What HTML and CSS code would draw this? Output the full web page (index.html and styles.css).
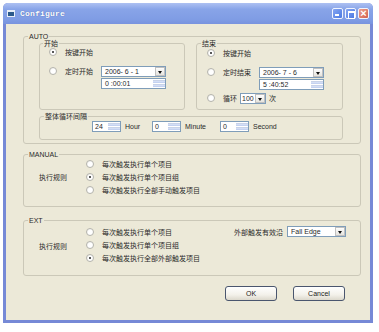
FILE: index.html
```html
<!DOCTYPE html>
<html lang="zh-CN">
<head>
  <meta charset="UTF-8" />
  <title>Configure</title>
  <link rel="stylesheet" href="styles.css">
</head>
<body>
  <div class="window">
    <div class="titlebar">
      <span class="app-icon"></span>
      <span class="title">Configure</span>
      <div class="caption-btns">
        <span class="cbtn min"></span>
        <span class="cbtn max"></span>
        <span class="cbtn close">×</span>
      </div>
    </div>

    <div class="client">
      <!-- AUTO -->
      <div class="group auto">
        <span class="group-title">AUTO</span>
        <div class="auto-top">
          <div class="group start">
            <span class="group-title">开始</span>
            <div class="opt"><span class="radio on"></span><span>按键开始</span></div>
            <div class="opt gap"><span class="radio"></span><span>定时开始</span>
              <div class="combo date"><span class="val">2006- 6 - 1</span><span class="drop"></span></div>
            </div>
            <div class="spin time"><span class="val">0 :00:01</span><span class="arrows"><i></i><i></i></span></div>
          </div>
          <div class="group stop">
            <span class="group-title">结束</span>
            <div class="opt"><span class="radio on"></span><span>按键开始</span></div>
            <div class="opt gap"><span class="radio"></span><span>定时结束</span>
              <div class="combo date"><span class="val">2006- 7 - 6</span><span class="drop"></span></div>
            </div>
            <div class="spin time"><span class="val">5 :40:52</span><span class="arrows"><i></i><i></i></span></div>
            <div class="opt loop"><span class="radio"></span><span>循环</span>
              <div class="combo count"><span class="val">100</span><span class="drop"></span></div>
              <span>次</span>
            </div>
          </div>
        </div>
        <div class="group interval">
          <span class="group-title">整体循环间隔</span>
          <div class="spin"><span class="val">24</span><span class="arrows"><i></i><i></i></span></div>
          <span class="unit">Hour</span>
          <div class="spin"><span class="val">0</span><span class="arrows"><i></i><i></i></span></div>
          <span class="unit">Minute</span>
          <div class="spin"><span class="val">0</span><span class="arrows"><i></i><i></i></span></div>
          <span class="unit">Second</span>
        </div>
      </div>

      <!-- MANUAL -->
      <div class="group manual">
        <span class="group-title">MANUAL</span>
        <span class="rule-label">执行规则</span>
        <div class="rules">
          <div class="rrow"><span class="radio"></span><span>每次触发执行单个项目</span></div>
          <div class="rrow"><span class="radio on"></span><span>每次触发执行单个项目组</span></div>
          <div class="rrow"><span class="radio"></span><span>每次触发执行全部手动触发项目</span></div>
        </div>
      </div>

      <!-- EXT -->
      <div class="group ext">
        <span class="group-title">EXT</span>
        <span class="rule-label">执行规则</span>
        <div class="rules">
          <div class="rrow"><span class="radio"></span><span>每次触发执行单个项目</span></div>
          <div class="rrow"><span class="radio"></span><span>每次触发执行单个项目组</span></div>
          <div class="rrow"><span class="radio on"></span><span>每次触发执行全部外部触发项目</span></div>
        </div>
        <div class="edge">
          <span>外部触发有效沿</span>
          <div class="combo edge-sel"><span class="val">Fall Edge</span><span class="drop"></span></div>
        </div>
      </div>

      <div class="actions">
        <button class="btn">OK</button>
        <button class="btn">Cancel</button>
      </div>
    </div>
  </div>
</body>
</html>
```

FILE: styles.css
```css
* { box-sizing: border-box; margin: 0; padding: 0; }
body {
  background: #fff;
  font-family: "Liberation Sans", "Noto Sans CJK SC", sans-serif;
  font-size: 7px;
  color: #2a2a2a;
}
.window {
  margin: 3px 0 0 3px;
  width: 370px;
  height: 320px;
  background: #7689d6;
  border-radius: 5px 5px 0 0;
  display: flex;
  flex-direction: column;
}
.titlebar {
  height: 21px;
  display: flex;
  align-items: center;
  padding: 0 3px 0 4px;
  border-radius: 5px 5px 0 0;
  background: linear-gradient(#adc0f2, #88a4e8 30%, #7f9ce4 80%, #7893de);
}
.app-icon {
  width: 8px;
  height: 7px;
  background: #2c5a8c;
  border: 1px solid #e8eef8;
  border-top-width: 2px;
}
.title {
  margin-left: 5px;
  font-family: "Liberation Mono", monospace;
  font-weight: bold;
  font-size: 8px;
  color: #fff;
  text-shadow: 0 0 1px #3c5aa8;
  letter-spacing: 0.2px;
}
.caption-btns {
  margin-left: auto;
  display: flex;
  gap: 2px;
  margin-right: 1px;
}
.cbtn {
  position: relative;
  width: 11px;
  height: 11px;
  border: 1px solid #f0f4ff;
  border-radius: 2px;
  background: linear-gradient(135deg, #86a6f2, #4a78e2);
}
.cbtn.min::after {
  content: "";
  position: absolute;
  left: 2px;
  bottom: 2px;
  width: 4px;
  height: 2px;
  background: #fff;
}
.cbtn.max::after {
  content: "";
  position: absolute;
  left: 2px;
  top: 2px;
  width: 5px;
  height: 5px;
  border: 1px solid #fff;
  border-top-width: 2px;
}
.cbtn.close {
  background: linear-gradient(135deg, #eba08e, #d2604e);
  color: #fff;
  font-size: 11px;
  font-weight: bold;
  line-height: 8px;
  text-align: center;
}

.client {
  flex: 1;
  margin: 0 3px 3px;
  background: #ece9d8;
  padding: 12px 9px 0 17px;
}
.group {
  position: relative;
  border: 1px solid #cbc8b8;
  border-radius: 3px;
}
.group-title {
  position: absolute;
  top: -5px;
  left: 4px;
  padding: 0 1px;
  line-height: 9px;
  background: #ece9d8;
}

.auto {
  height: 108px;
  padding: 6px 0 0 15px;
}
.auto-top {
  display: flex;
  gap: 11px;
}
.start, .stop {
  height: 67px;
  padding: 2px 0 0 9px;
}
.start { width: 146px; }
.stop { width: 147px; padding-left: 10px; padding-top: 3px; }
.start .group-title { left: 3px; }
.opt {
  display: flex;
  align-items: center;
  gap: 8px;
  height: 12px;
}
.opt.gap { margin-top: 7px; }
.opt.loop { margin-top: 2px; gap: 3px; }
.opt.loop .radio { margin-right: 5px; }

.radio {
  position: relative;
  width: 8px;
  height: 8px;
  border-radius: 50%;
  border: 1px solid #b4b4ae;
  background: radial-gradient(circle at 65% 65%, #fff 45%, #ecebe4);
  flex: none;
}
.radio.on::after {
  content: "";
  position: absolute;
  left: 2px;
  top: 2px;
  width: 2px;
  height: 2px;
  border-radius: 50%;
  background: #222;
}

.combo, .spin {
  display: flex;
  height: 11px;
  border: 1px solid #7f9db9;
  background: #fff;
}
.val {
  padding-left: 3px;
  line-height: 9px;
  white-space: nowrap;
}
.drop {
  position: relative;
  margin-left: auto;
  width: 10px;
  border: 1px solid #c0c0c0;
  background: linear-gradient(#fdfdfd, #e6e4de);
}
.drop::after {
  content: "";
  position: absolute;
  left: 2px;
  top: 3px;
  border-top: 3px solid #111;
  border-left: 2px solid transparent;
  border-right: 2px solid transparent;
}
.date { width: 65px; }
.count { width: 26px; }
.count .val { padding-left: 1px; }
.edge-sel { width: 59px; }

.arrows {
  margin-left: auto;
  width: 12px;
  display: flex;
  flex-direction: column;
  gap: 1px;
  padding: 1px 0;
}
.arrows i {
  flex: 1;
  background: linear-gradient(#dce5f8, #bccbee);
  border-top: 1px solid #c8d2e8;
}
.spin.time {
  width: 65px;
  margin: 1px 0 0 52px;
}

.interval {
  margin-top: 6px;
  width: 304px;
  height: 24px;
  padding: 4px 0 0 52px;
  display: grid;
  grid-template-columns: 29px 31px 29px 39px 29px auto;
  align-items: center;
  align-content: start;
}
.interval .val { padding-left: 2px; }
.unit { padding-left: 4px; }

.manual, .ext {
  display: flex;
  align-items: center;
  padding-left: 15px;
}
.manual {
  margin-top: 10px;
  height: 53px;
  padding-bottom: 8px;
}
.ext {
  margin-top: 13px;
  height: 56px;
  align-items: flex-start;
  padding-top: 4px;
}
.rule-label {
  width: 47px;
}
.ext .rule-label { margin-top: 16px; }
.rrow {
  display: flex;
  align-items: center;
  gap: 8px;
  height: 13px;
}
.edge {
  margin-left: auto;
  margin-right: 14px;
  height: 13px;
  display: flex;
  align-items: center;
  gap: 4px;
}

.actions {
  display: flex;
  justify-content: flex-end;
  gap: 16px;
  margin-top: 10px;
  padding-right: 16px;
}
.btn {
  width: 52px;
  height: 15px;
  border: 1px solid #4a566e;
  border-radius: 3px;
  background: linear-gradient(#fff, #f3f1ea 60%, #dcd8cc);
  font-family: "Liberation Sans", sans-serif;
  font-size: 7px;
  color: #222;
}
```
